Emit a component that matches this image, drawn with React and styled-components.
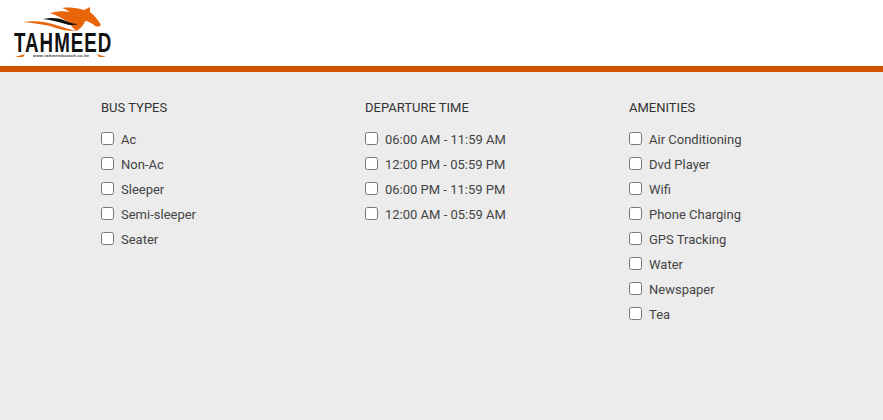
import React from "react";
import styled, { createGlobalStyle } from "styled-components";

const GlobalStyle = createGlobalStyle`
  html, body {
    margin: 0;
    padding: 0;
    height: 100%;
    overflow: hidden;
  }
  body {
    font-family: Roboto, "Liberation Sans", sans-serif;
    background: #ececec;
  }
`;

const Header = styled.header`
  height: 66px;
  background: #fff;
  border-bottom: 6px solid #d35400;
  display: flex;
  align-items: flex-start;
  padding-left: 12px;
`;

const Logo = styled.div`
  position: relative;
  width: 100px;
  height: 60px;
`;

const LogoArt = styled.svg`
  position: absolute;
  left: 0;
  top: 0;
`;

const LogoName = styled.span`
  position: absolute;
  left: 2px;
  top: 32px;
  font-family: "Liberation Sans", sans-serif;
  font-weight: 700;
  font-size: 28px;
  line-height: 22px;
  color: #111;
  letter-spacing: 1.5px;
  transform: scaleX(0.67);
  transform-origin: left top;
  white-space: nowrap;
`;

const LogoUrl = styled.span`
  position: absolute;
  left: 21px;
  top: 54px;
  font-family: "Liberation Sans", sans-serif;
  font-weight: 700;
  font-size: 4px;
  line-height: 4px;
  letter-spacing: 0.3px;
  color: #333;
  white-space: nowrap;
`;

const Filters = styled.main`
  display: grid;
  grid-template-columns: repeat(3, 264px);
  padding: 28px 0 0 101px;
`;

const Column = styled.section`
  display: flex;
  flex-direction: column;
`;

const Title = styled.h3`
  margin: 0 0 11px;
  font-size: 13px;
  line-height: 16px;
  font-weight: 400;
  color: #333;
`;

const Option = styled.label`
  display: flex;
  align-items: center;
  height: 25px;
  font-size: 13px;
  color: #444;
`;

const Check = styled.input.attrs({ type: "checkbox" })`
  width: 13px;
  height: 13px;
  margin: 0 7px 2px 0;
  flex: none;
`;

const columns = [
  { title: "BUS TYPES", options: ["Ac", "Non-Ac", "Sleeper", "Semi-sleeper", "Seater"] },
  {
    title: "DEPARTURE TIME",
    options: ["06:00 AM - 11:59 AM", "12:00 PM - 05:59 PM", "06:00 PM - 11:59 PM", "12:00 AM - 05:59 AM"],
  },
  {
    title: "AMENITIES",
    options: ["Air Conditioning", "Dvd Player", "Wifi", "Phone Charging", "GPS Tracking", "Water", "Newspaper", "Tea"],
  },
];

export default function App() {
  return (
    <>
      <GlobalStyle />
      <Header>
        <Logo>
          <LogoArt width="100" height="60" viewBox="12 0 100 60">
            {/* horse head with flame mane */}
            <path
              fill="#e8650a"
              d="M50 13 C58 11 64 11 70 12 C67 10 65 9 62 8 C70 7 78 8 84 10 L90 7 L90 12 C94 15 98 20 101 25 C99 27 96 27 94 25 C91 23 88 21 85 21 C84 25 80 29 76 31 C72 27 70 24 68 22 C62 18 56 15 50 13 Z"
            />
            <path
              fill="#111"
              d="M43 19 C52 17 60 18 66 21 C70 23 74 24 78 24 C72 26 68 25 62 23 C56 21 50 20 43 19 Z"
            />
            <path
              fill="#e8650a"
              d="M23 22 C36 20 46 22 56 25 C62 27 68 29 76 31 C66 31 58 29 50 26 C42 24 32 23 23 22 Z"
            />
            <path fill="#e8650a" d="M15 57 L25 54 L23 57 Z" />
            <path fill="#e8650a" d="M97 54 L106 57 L99 57 Z" />
          </LogoArt>
          <LogoName>TAHMEED</LogoName>
          <LogoUrl>www.tahmeedcoach.co.ke</LogoUrl>
        </Logo>
      </Header>
      <Filters>
        {columns.map((col) => (
          <Column key={col.title}>
            <Title>{col.title}</Title>
            {col.options.map((opt) => (
              <Option key={opt}>
                <Check />
                {opt}
              </Option>
            ))}
          </Column>
        ))}
      </Filters>
    </>
  );
}
